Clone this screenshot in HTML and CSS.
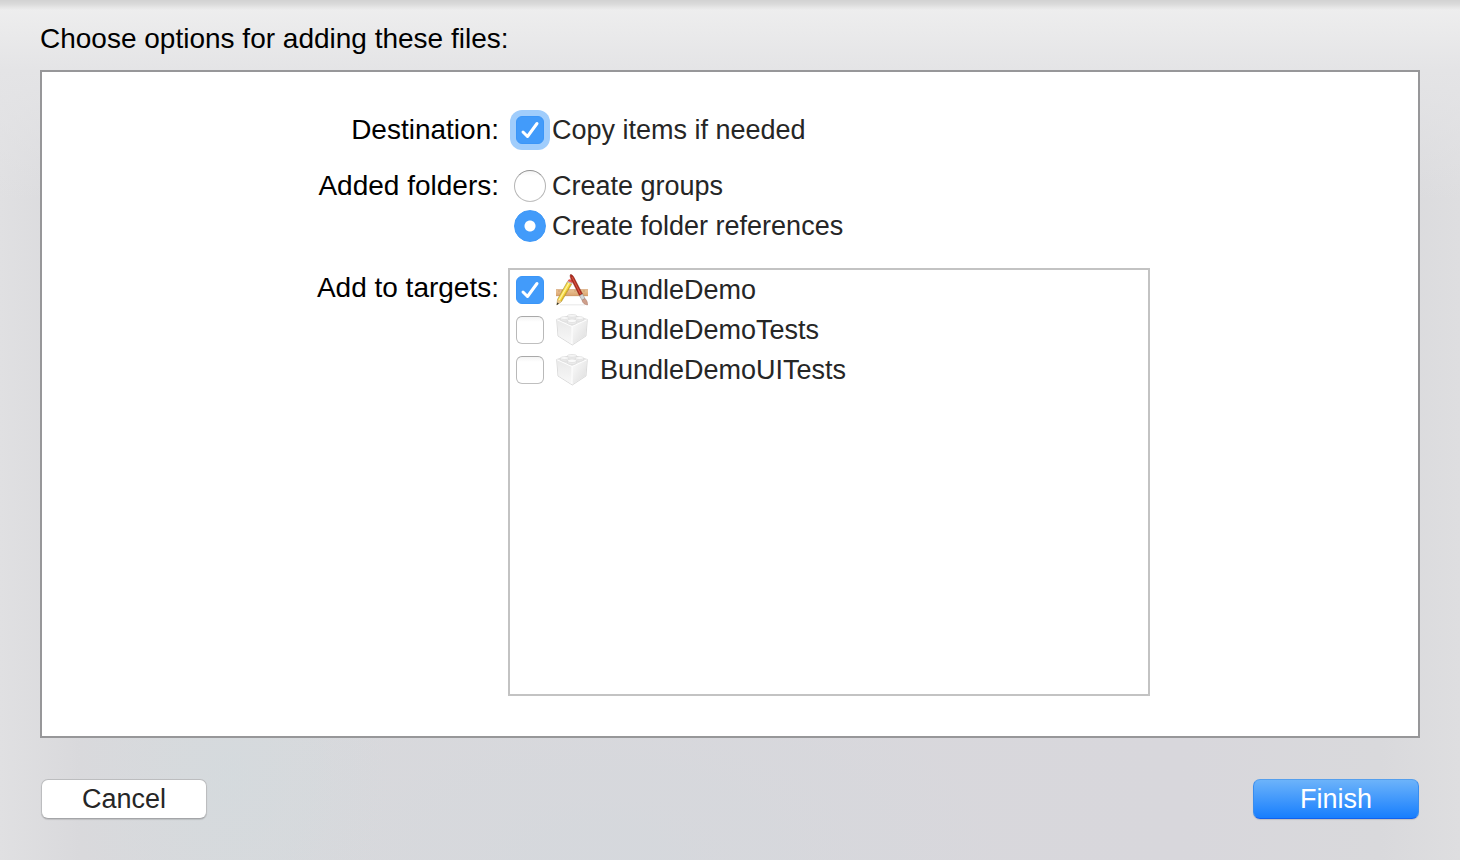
FILE: index.html
```html
<!DOCTYPE html>
<html lang="en">
<head>
<meta charset="utf-8">
<meta name="viewport" content="width=device-width, initial-scale=1">
<title>Add Files</title>
<link rel="stylesheet" href="styles.css">
</head>
<body>
<svg class="defs" width="0" height="0" aria-hidden="true">
  <defs>
    <linearGradient id="wood" x1="0" y1="0" x2="0" y2="1"><stop offset="0" stop-color="#ecc699"/><stop offset="1" stop-color="#d9a26c"/></linearGradient>
    <linearGradient id="brickLeft" x1="0" y1="0" x2="0" y2="1"><stop offset="0" stop-color="#e9e9e9"/><stop offset="1" stop-color="#f8f8f8"/></linearGradient>
    <linearGradient id="brickRight" x1="0" y1="0" x2="1" y2="1"><stop offset="0" stop-color="#fcfcfc"/><stop offset="1" stop-color="#dcdcdc"/></linearGradient>
    <symbol id="brick" viewBox="0 0 32 32">
      <path d="M.7 5.500 16 1 31.300 5.500 30 22 16.300 31 2 22Z" fill="#f3f3f3" stroke="#d2d2d2" stroke-width=".8"/>
      <path d="M1.200 6 16 12.500 16.300 30.500 2.500 21.800Z" fill="url(#brickLeft)"/>
      <path d="M30.800 6 16 12.500 16.300 30.500 29.500 21.800Z" fill="url(#brickRight)"/>
      <path d="M1.200 5.600 16 1.500 30.800 5.600 16 12.500Z" fill="#e6e6e6"/>
      <path d="M1.200 5.800 16 12.500 30.800 5.800M16 12.500V30" fill="none" stroke="#fff" stroke-width="1"/>
      <g fill="#ececec" stroke="#d4d4d4" stroke-width=".5">
        <path d="M11.500 1.800v2c0 2 9 2 9 0v-2"/><ellipse cx="16" cy="1.800" rx="4.500" ry="1.400" fill="#f5f5f5"/>
        <path d="M4.500 4v1.800c0 1.800 8 1.800 8 0V4"/><ellipse cx="8.500" cy="4" rx="4" ry="1.500" fill="#f8f8f8"/>
        <path d="M19.500 4v1.800c0 1.800 8 1.800 8 0V4"/><ellipse cx="23.500" cy="4" rx="4" ry="1.500" fill="#f8f8f8"/>
        <path d="M11.500 6.800v2c0 2.200 9 2.200 9 0v-2"/><ellipse cx="16" cy="6.800" rx="4.500" ry="1.800" fill="#fafafa"/>
      </g>
    </symbol>
  </defs>
</svg>
<form class="sheet">
  <h1 class="title">Choose options for adding these files:</h1>
  <main class="panel">
    <span class="label" id="destination">Destination:</span>
    <div class="field" role="group" aria-labelledby="destination">
      <label class="option"><input class="check focused" type="checkbox" checked>Copy items if needed</label>
    </div>

    <span class="label" id="folders">Added folders:</span>
    <div class="field" role="radiogroup" aria-labelledby="folders">
      <label class="option"><input class="radio" type="radio" name="folders">Create groups</label>
      <label class="option"><input class="radio" type="radio" name="folders" checked>Create folder references</label>
    </div>

    <span class="label targets-label" id="targets">Add to targets:</span>
    <div class="field targets" role="group" aria-labelledby="targets">
      <label class="target"><input class="check" type="checkbox" checked>
        <svg class="icon" viewBox="0 0 32 32" aria-hidden="true">
          <path d="M4 30.800H29" stroke="#000" stroke-opacity=".08" stroke-width="1.200"/>
          <path d="M0 15.500H32V22H0Z" fill="url(#wood)"/>
          <path d="M0 15.700H32M0 21.700H32" stroke="#cd9a68" stroke-width=".7"/>
          <path d="M3 16v2M6 16v2M9 16v2M19 16v2M22 16v2M28 16v2" stroke="#c08b59" stroke-width=".6"/>
          <path d="M11.500 7.500 16 9.500 5.500 27.500 1 30.800 1.500 25.500Z" fill="#f8dc45" stroke="#9c8430" stroke-width=".6"/>
          <path d="M13 9 3 26.300" stroke="#fff4a0" stroke-width="1.200"/>
          <path d="M15.200 9.800 5 27" stroke="#d3a726" stroke-width=".9"/>
          <path d="M1.500 25.500 5.500 27.500 1 30.800Z" fill="#e8c491"/>
          <path d="M1.200 28.500 3 29.500 .6 31.200Z" fill="#333"/>
          <path d="M11.500 7.500 16 9.500 16.700 7.700C16.500 5.500 13.500 4.500 12.200 6Z" fill="#e95550"/>
          <path d="M11.500 7.700 16 9.700" stroke="#c3c6c9" stroke-width="1.300"/>
          <path d="M14.500.5C15.500.2 17 1.500 18 3.500L26.500 20 23.500 21.700 15 5C14.200 3.500 13.800 1 14.500.5Z" fill="#b02a1d" stroke="#7a2018" stroke-width=".5"/>
          <path d="M16 3 24.500 20" stroke="#e2674f" stroke-width=".8"/>
          <path d="M23.500 21.700 26.500 20 29 24.500 26 26.300Z" fill="#d2d5d7" stroke="#8a8a8a" stroke-width=".5"/>
          <path d="M26 26.300 29 24.500C31.500 27 31.500 29 31.500 31 28.500 30.500 26.500 29 26 26.300Z" fill="#cf9f8b" stroke="#a47564" stroke-width=".5"/>
        </svg>BundleDemo</label>
      <label class="target"><input class="check" type="checkbox"><svg class="icon" aria-hidden="true"><use href="#brick"/></svg>BundleDemoTests</label>
      <label class="target"><input class="check" type="checkbox"><svg class="icon" aria-hidden="true"><use href="#brick"/></svg>BundleDemoUITests</label>
    </div>
  </main>
  <footer class="actions">
    <button class="button" type="button">Cancel</button>
    <button class="button primary" type="submit">Finish</button>
  </footer>
</form>
</body>
</html>
```
FILE: styles.css
```css
* { box-sizing: border-box; }

body {
  margin: 0;
  font: 27px/40px "Liberation Sans", Arial, sans-serif;
  color: #262626;
}

.defs { position: absolute; }

.sheet {
  display: flex;
  flex-direction: column;
  min-height: 100vh;
  padding: 0 40px;
  background:
    linear-gradient(#d2d2d2, #dadada 4px, rgba(230, 230, 230, 0) 10px),
    linear-gradient(#efefef, #e4e4e6 70px, rgba(224, 224, 226, 0) 200px),
    radial-gradient(ellipse 160px 200px at 230px 780px, rgba(210, 219, 222, .6), rgba(210, 219, 222, 0)),
    radial-gradient(ellipse 400px 200px at 600px 860px, rgba(211, 216, 221, .6), rgba(211, 216, 221, 0)),
    linear-gradient(90deg, #e0e0e2, #d9d9dc 80px, #d8d7dc 1180px, #d9d9dc 1380px, #dedee0);
}

.title {
  margin: 0;
  padding: 19px 0 11px;
  font-size: 28px;
  font-weight: 400;
  color: #000;
}

.panel {
  flex: 1;
  display: grid;
  grid-template-columns: 457fr 642fr 259fr;
  grid-template-rows: auto auto 1fr;
  gap: 16px 9px;
  padding: 38px 0 40px;
  border: 2px solid #979799;
  background: #fff;
}

.label {
  grid-column: 1;
  font-size: 28px;
  color: #000;
  text-align: right;
  white-space: nowrap;
}

.field {
  grid-column: 2;
  display: flex;
  flex-direction: column;
}

.option, .target {
  display: flex;
  align-items: center;
  height: 40px;
  white-space: nowrap;
}

.targets-label, .targets { margin-top: 6px; }

.targets { border: 2px solid #c3c3c3; }

.target { gap: 12px; padding-left: 6px; }

.check, .radio {
  appearance: none;
  flex: none;
  margin: 0;
  border: 1px solid #b9b9b9;
  background: linear-gradient(#f4f4f4, #fff 5px);
}

.check {
  width: 28px;
  height: 28px;
  border-color: #a9a9a9 #b9b9b9 #bfbfbf;
  border-radius: 6px;
}

.option .check { margin: 0 8px; }

.check:checked {
  border-color: #3b96f8;
  background: #429bfa url("data:image/svg+xml,%3Csvg xmlns='http://www.w3.org/2000/svg' viewBox='0 0 26 26'%3E%3Cpath d='M6 15 10.500 19.500 20 6.500' fill='none' stroke='%23fff' stroke-width='3' stroke-linecap='round' stroke-linejoin='round'/%3E%3C/svg%3E") center / 26px;
}

.focused { box-shadow: 0 0 0 6px #a0cdfc; }

.radio {
  width: 32px;
  height: 32px;
  margin: 0 6px;
  border-color: #929292 #b5b5b5 #c0c0c0;
  border-radius: 50%;
}

.radio:checked {
  border-color: #3e98f8;
  background: radial-gradient(circle, #fff 5px, #429bfa 6px);
}

.icon { width: 32px; height: 32px; flex: none; }

.actions {
  display: flex;
  justify-content: space-between;
  padding: 41px 1px;
}

.button {
  width: 166px;
  height: 40px;
  padding: 0;
  border: 1px solid #bcbdbf;
  border-bottom-color: #a4a5a8;
  border-radius: 7px;
  background: #fff;
  box-shadow: 0 1px 1px rgba(0, 0, 0, .12);
  font: inherit;
  line-height: 38px;
  color: #262626;
}

.primary {
  border-color: #559fed #398dee #1261ee;
  background: linear-gradient(#6cb3fa, #177efe);
  color: #fff;
}
```
